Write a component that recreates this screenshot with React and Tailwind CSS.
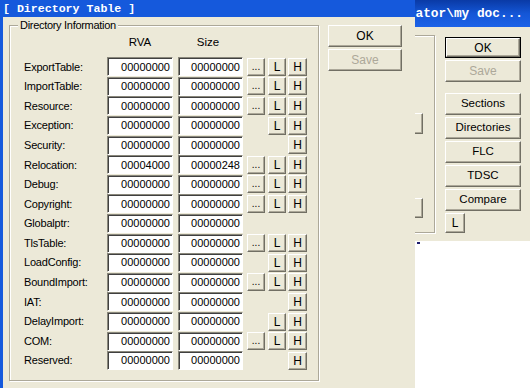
import React from 'react';

const rows = [
  { name: 'ExportTable:', rva: '00000000', size: '00000000', dots: true, l: true, h: true },
  { name: 'ImportTable:', rva: '00000000', size: '00000000', dots: true, l: true, h: true },
  { name: 'Resource:', rva: '00000000', size: '00000000', dots: true, l: true, h: true },
  { name: 'Exception:', rva: '00000000', size: '00000000', dots: false, l: true, h: true },
  { name: 'Security:', rva: '00000000', size: '00000000', dots: false, l: false, h: true },
  { name: 'Relocation:', rva: '00004000', size: '00000248', dots: true, l: true, h: true },
  { name: 'Debug:', rva: '00000000', size: '00000000', dots: true, l: true, h: true },
  { name: 'Copyright:', rva: '00000000', size: '00000000', dots: true, l: true, h: true },
  { name: 'Globalptr:', rva: '00000000', size: '00000000', dots: false, l: false, h: false },
  { name: 'TlsTable:', rva: '00000000', size: '00000000', dots: true, l: true, h: true },
  { name: 'LoadConfig:', rva: '00000000', size: '00000000', dots: false, l: true, h: true },
  { name: 'BoundImport:', rva: '00000000', size: '00000000', dots: true, l: true, h: true },
  { name: 'IAT:', rva: '00000000', size: '00000000', dots: false, l: false, h: true },
  { name: 'DelayImport:', rva: '00000000', size: '00000000', dots: false, l: true, h: true },
  { name: 'COM:', rva: '00000000', size: '00000000', dots: true, l: true, h: true },
  { name: 'Reserved:', rva: '00000000', size: '00000000', dots: false, l: false, h: true },
];

// classic raised push button
const Btn = ({ children, className = '', disabled = false }) => (
  <div
    className={`flex items-center justify-center bg-[#ece9d8] border border-t-white border-l-white border-b-[#716f64] border-r-[#716f64] shadow-[inset_-1px_-1px_0_#aca899] ${disabled ? 'text-[#aca899]' : 'text-black'} ${className}`}
  >
    {children}
  </div>
);

// sunken edit box
const Field = ({ value, className = '' }) => (
  <div
    className={`h-[19px] flex items-center justify-end pr-[2px] bg-white border border-t-[#8a887c] border-l-[#8a887c] border-b-white border-r-white shadow-[inset_1px_1px_0_#404040] text-[11px] text-black ${className}`}
  >
    {value}
  </div>
);

const App = () => {
  return (
    <div className="relative w-[530px] h-[388px] overflow-hidden bg-white font-['Liberation_Sans',Arial,sans-serif] text-[11px] text-black select-none">
      {/* window behind */}
      <div className="absolute left-[300px] top-0 w-[240px] h-[241px] bg-[#ece9d8] flex flex-col">
        <div className="h-[27px] shrink-0 flex items-center justify-end pr-[17px] bg-gradient-to-b from-[#0a3aa6] via-[#1456d6] to-[#1c62e8]">
          <span className="font-['Liberation_Mono',monospace] font-bold text-[12.8px] text-white pt-[1px] whitespace-pre">
            {'ator\\my doc...'}
          </span>
        </div>
        <div className="flex pt-[8px]">
          <div className="ml-[10px] w-[125px] h-[198px] border border-[#aca899] shadow-[1px_1px_0_#fff,inset_1px_1px_0_#fff] flex flex-col items-end pr-[11px]">
            <Btn className="mt-[77px] w-[60px] h-[21px]" />
            <Btn className="mt-[64px] w-[60px] h-[20px]" />
          </div>
          <div className="ml-[10px] w-[76px] flex flex-col text-[11.5px]">
            <div className="mt-[2px] h-[21px] border border-black">
              <Btn className="h-full w-full text-[12px]">OK</Btn>
            </div>
            <Btn disabled className="mt-[2px] h-[22px] text-[12px]">Save</Btn>
            <Btn className="mt-[11px] h-[22px]">Sections</Btn>
            <Btn className="mt-[2px] h-[22px]">Directories</Btn>
            <Btn className="mt-[2px] h-[22px]">FLC</Btn>
            <Btn className="mt-[2px] h-[22px]">TDSC</Btn>
            <Btn className="mt-[2px] h-[22px]">Compare</Btn>
            <Btn className="mt-[2px] w-[20px] h-[20px] text-[12px]">L</Btn>
          </div>
        </div>
      </div>

      {/* stray caret on the desktop */}
      <div className="absolute left-[417px] top-[242px] w-[3px] h-[2px] bg-[#1e1e6e]" />

      {/* Directory Table dialog */}
      <div className="absolute left-0 top-0 w-[415px] h-[400px] flex flex-col bg-[#ece9d8] border-l-[3px] border-[#1559dc]">
        <div className="h-[17px] shrink-0 flex items-center bg-[#1559dc]">
          <span className="font-['Liberation_Mono',monospace] font-bold text-[11.6px] text-white whitespace-pre leading-none">
            [ Directory Table ]
          </span>
        </div>

        <div className="flex pt-[8px]">
          {/* group box */}
          <div className="relative ml-[6px] w-[310px] h-[356px] border border-[#aca899] shadow-[1px_1px_0_#fff,inset_1px_1px_0_#fff] pl-[14px]">
            <span className="absolute left-[8px] -top-[7px] px-[2px] bg-[#ece9d8] leading-[13px] text-[11px] tracking-[-0.3px]">
              Directory Information
            </span>

            <div className="mt-[9px] h-[14px] leading-[14px] flex">
              <div className="w-[83px]" />
              <div className="w-[66px] text-center text-[11.5px]">RVA</div>
              <div className="ml-[5px] w-[60px] text-center text-[11.5px]">Size</div>
            </div>

            <div className="mt-[8px] flex flex-col">
              {rows.map((r) => (
                <div key={r.name} className="h-[19.6px] flex items-center">
                  <div className="w-[83px] text-[11px] tracking-[-0.2px]">{r.name}</div>
                  <Field value={r.rva} className="w-[66px]" />
                  <Field value={r.size} className="ml-[5px] w-[65px]" />
                  <div className="ml-[4px] w-[18px] h-[18px]">
                    {r.dots && <Btn className="w-full h-full items-end pb-[3px] text-[10px] leading-none">...</Btn>}
                  </div>
                  <div className="ml-[3px] w-[18px] h-[18px]">
                    {r.l && <Btn className="w-full h-full text-[12px]">L</Btn>}
                  </div>
                  <div className="ml-[2px] w-[19px] h-[18px]">
                    {r.h && <Btn className="w-full h-full text-[12px]">H</Btn>}
                  </div>
                </div>
              ))}
            </div>
          </div>

          {/* side buttons */}
          <div className="ml-[9px] w-[74px] flex flex-col text-[12px]">
            <Btn className="h-[22px]">OK</Btn>
            <Btn disabled className="mt-[2px] h-[22px]">Save</Btn>
          </div>
        </div>
      </div>
    </div>
  );
};

export default App;
